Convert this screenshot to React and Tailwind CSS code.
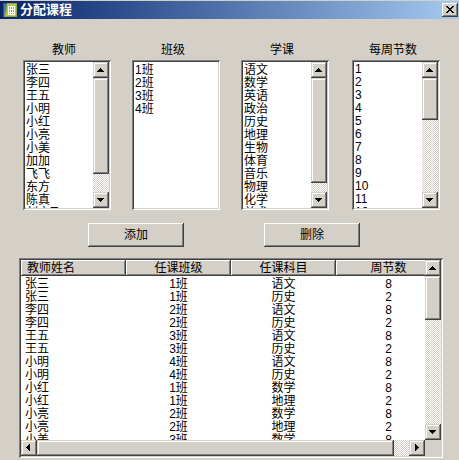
import { useRef } from "react"

const teachers = ["张三", "李四", "王五", "小明", "小红", "小亮", "小美", "加加", "飞飞", "东方", "陈真", "刘文飞"]
const classes = ["1班", "2班", "3班", "4班"]
const subjects = ["语文", "数学", "英语", "政治", "历史", "地理", "生物", "体育", "音乐", "物理", "化学", "美术"]
const hours = ["1", "2", "3", "4", "5", "6", "7", "8", "9", "10", "11", "12"]

const courses = [
  ["张三", "1班", "语文", 8],
  ["张三", "1班", "历史", 2],
  ["李四", "2班", "语文", 8],
  ["李四", "2班", "历史", 2],
  ["王五", "3班", "语文", 8],
  ["王五", "3班", "历史", 2],
  ["小明", "4班", "语文", 8],
  ["小明", "4班", "历史", 2],
  ["小红", "1班", "数学", 8],
  ["小红", "1班", "地理", 2],
  ["小亮", "2班", "数学", 8],
  ["小亮", "2班", "地理", 2],
  ["小美", "3班", "数学", 8],
]

// classic 3D edges
const sunken = "p-[2px] bg-white shadow-[inset_1px_1px_0_#808080,inset_-1px_-1px_0_#ffffff,inset_2px_2px_0_#404040,inset_-2px_-2px_0_#d4d0c8]"
const raised = "bg-[#d4d0c8] shadow-[inset_-1px_-1px_0_#404040,inset_1px_1px_0_#d4d0c8,inset_-2px_-2px_0_#808080,inset_2px_2px_0_#ffffff]"
const pushed = "bg-[#d4d0c8] shadow-[inset_-1px_-1px_0_#404040,inset_1px_1px_0_#ffffff,inset_-2px_-2px_0_#808080]"
const track = "bg-[repeating-conic-gradient(#ffffff_0_25%,#d4d0c8_0_50%)] bg-size-[2px_2px]"

const arrows = {
  up: "M7 6h1v1h1v1h1v1h1v1H4V9h1V8h1V7h1z",
  down: "M4 6h7v1h-1v1H9v1H8v1H7V9H6V8H5V7H4z",
  left: "M5 7h1V6h1V5h1V4h1v7H8v-1H7V9H6V8H5z",
  right: "M6 4h1v1h1v1h1v1h1v1H9v1H8v1H7v1H6z",
}

const ArrowButton = ({ dir, label, onClick }) => (
  <button type="button" aria-label={label} onClick={onClick} className={`size-4 shrink-0 ${raised}`}>
    <svg viewBox="0 0 16 16" className="size-4" shapeRendering="crispEdges">
      <path d={arrows[dir]} />
    </svg>
  </button>
)

const VScroll = ({ target, thumb }) => {
  const scroll = (top) => target.current.scrollBy({ top })
  return (
    <div className={`w-4 shrink-0 flex flex-col ${track}`}>
      <ArrowButton dir="up" label="向上滚动" onClick={() => scroll(-13)} />
      <div className={`${thumb} ${raised}`}></div>
      <div className="flex-1"></div>
      <ArrowButton dir="down" label="向下滚动" onClick={() => scroll(13)} />
    </div>
  )
}

const ListBox = ({ id, label, items, thumb, className }) => {
  const list = useRef(null)
  return (
    <div className={`w-[88px] ${className || ""}`}>
      <label htmlFor={id} className="block h-[18px] pr-1.5 text-center leading-4">{label}</label>
      <div className={`flex h-[150px] ${sunken}`}>
        <select id={id} ref={list} size={11} className="flex-1 min-w-0 h-full p-0 overflow-hidden outline-0 bg-white">
          {items.map((item) => (
            <option key={item} className="flex items-center h-[13px] min-h-0 p-0 pl-px text-black">{item}</option>
          ))}
        </select>
        {thumb && <VScroll target={list} thumb={thumb} />}
      </div>
    </div>
  )
}

const TitleBar = () => (
  <header className="mt-px h-[18px] flex items-center pl-[3px] pr-px bg-linear-to-r from-[#0a246a] to-[#a6caf0]">
    <svg viewBox="0 0 14 14" className="size-3.5" shapeRendering="crispEdges">
      <path d="M0 0h5v14H0z" fill="#2f5a62" />
      <path d="M1 1h3v3H3v4H2v3H1z" fill="#4f8494" />
      <path d="M4 0h10v14H1v-3h1V8h1V4h1z" fill="#8fa83a" />
      <path d="M4 1h9v12H3V9h1z" fill="#b4c850" />
      <path d="M5 3h7v9H5z" fill="#fffff0" />
      <path d="M6 4h1v2H6zM8 4h1v2H8zM10 4h1v2h-1zM6 7h1v2H6zM8 7h1v2H8zM10 7h1v2h-1zM6 10h1v1H6zM8 10h1v1H8zM10 10h1v1h-1z" fill="#8fae2c" />
    </svg>
    <h1 className="pl-[3px] flex-1 text-[13px] leading-[18px] font-bold text-white">分配课程</h1>
    <button type="button" aria-label="关闭" className={`w-4 h-3.5 ${pushed}`}>
      <svg viewBox="0 0 16 14" className="w-4 h-3.5" shapeRendering="crispEdges">
        <path d="M4 3h2v1h1v1h2V4h1V3h2v1h-1v1h-1v1H9v1h1v1h1v1h1v1h-2V9H9V8H7v1H6v1H4V9h1V8h1V7h1V6H6V5H5V4H4z" />
      </svg>
    </button>
  </header>
)

const CourseTable = () => {
  const body = useRef(null)
  const side = (left) => body.current.scrollBy({ left })
  const th = `w-[105px] h-4 p-0 font-normal leading-4 ${pushed}`
  return (
    <div className={`ml-[19px] mr-4 mt-[11px] h-[200px] flex flex-col ${sunken}`}>
      <div className="flex flex-1 min-h-0">
        <div ref={body} className="flex-1 min-w-0 overflow-hidden">
          <table className="table-fixed w-[420px] border-collapse text-center leading-[13px]">
            <thead>
              <tr>
                <th className={`${th} pl-1.5 text-left`}>教师姓名</th>
                <th className={th}>任课班级</th>
                <th className={th}>任课科目</th>
                <th className={th}>周节数</th>
              </tr>
            </thead>
            <tbody className="before:block before:h-[2px]">
              {courses.map(([name, cls, subject, count], i) => (
                <tr key={i} className="h-[13px]">
                  <td className="p-0 pl-1 text-left">{name}</td>
                  <td className="p-0">{cls}</td>
                  <td className="p-0">{subject}</td>
                  <td className="p-0">{count}</td>
                </tr>
              ))}
            </tbody>
          </table>
        </div>
        <VScroll target={body} thumb="h-11" />
      </div>
      <div className="flex bg-[#d4d0c8] pr-4">
        <ArrowButton dir="left" label="向左滚动" onClick={() => side(-16)} />
        <div className={`flex-1 ${track}`}>
          <div className={`h-4 w-[96%] ${raised}`}></div>
        </div>
        <ArrowButton dir="right" label="向右滚动" onClick={() => side(16)} />
      </div>
    </div>
  )
}

const App = () => {
  return (
    <div className="min-h-screen flow-root bg-[#d4d0c8] text-black text-[12px] font-['Liberation_Sans','Noto_Sans_CJK_SC',sans-serif]">
      <TitleBar />
      <main>
        <div className="flex gap-[21px] pt-[23px] pl-[23px] pr-[19px]">
          <ListBox id="teacher" label="教师" items={teachers} thumb="h-24" />
          <ListBox id="class" label="班级" items={classes} />
          <ListBox id="subject" label="学课" items={subjects} thumb="h-[105px]" />
          <ListBox id="hours" label="每周节数" items={hours} thumb="h-[42px]" className="ml-auto" />
        </div>
        <div className="flex gap-20 pl-[88px] pt-[13px]">
          <button type="button" className={`w-24 h-6 leading-4 ${pushed}`}>添加</button>
          <button type="button" className={`w-24 h-6 leading-4 ${pushed}`}>删除</button>
        </div>
        <CourseTable />
      </main>
    </div>
  )
}
export default App
